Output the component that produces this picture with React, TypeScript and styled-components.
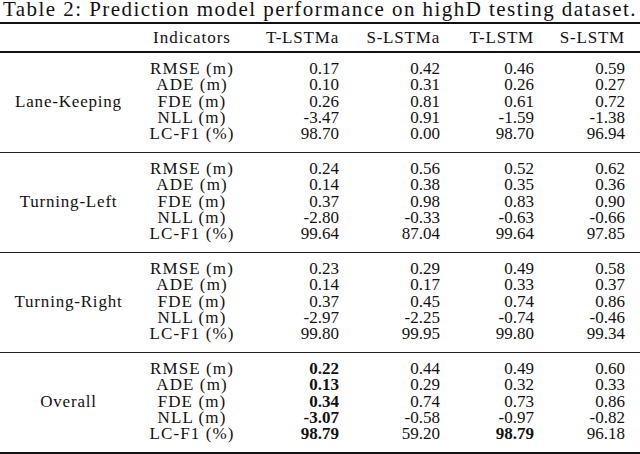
import styled, { createGlobalStyle } from "styled-components";

const GlobalStyle = createGlobalStyle`
  html, body {
    margin: 0;
    padding: 0;
    background: #fff;
  }
  body {
    font-family: "Liberation Serif", "Times New Roman", serif;
    color: #111;
  }
`;

type Cell = { v: string; bold?: boolean };

interface Group {
  name: string;
  rows: Cell[][];
}

const INDICATORS = ["RMSE (m)", "ADE (m)", "FDE (m)", "NLL (m)", "LC-F1 (%)"];
const MODELS = ["T-LSTMa", "S-LSTMa", "T-LSTM", "S-LSTM"];

const c = (v: string, bold = false): Cell => ({ v, bold });

const groups: Group[] = [
  {
    name: "Lane-Keeping",
    rows: [
      [c("0.17"), c("0.42"), c("0.46"), c("0.59")],
      [c("0.10"), c("0.31"), c("0.26"), c("0.27")],
      [c("0.26"), c("0.81"), c("0.61"), c("0.72")],
      [c("-3.47"), c("0.91"), c("-1.59"), c("-1.38")],
      [c("98.70"), c("0.00"), c("98.70"), c("96.94")],
    ],
  },
  {
    name: "Turning-Left",
    rows: [
      [c("0.24"), c("0.56"), c("0.52"), c("0.62")],
      [c("0.14"), c("0.38"), c("0.35"), c("0.36")],
      [c("0.37"), c("0.98"), c("0.83"), c("0.90")],
      [c("-2.80"), c("-0.33"), c("-0.63"), c("-0.66")],
      [c("99.64"), c("87.04"), c("99.64"), c("97.85")],
    ],
  },
  {
    name: "Turning-Right",
    rows: [
      [c("0.23"), c("0.29"), c("0.49"), c("0.58")],
      [c("0.14"), c("0.17"), c("0.33"), c("0.37")],
      [c("0.37"), c("0.45"), c("0.74"), c("0.86")],
      [c("-2.97"), c("-2.25"), c("-0.74"), c("-0.46")],
      [c("99.80"), c("99.95"), c("99.80"), c("99.34")],
    ],
  },
  {
    name: "Overall",
    rows: [
      [c("0.22", true), c("0.44"), c("0.49"), c("0.60")],
      [c("0.13", true), c("0.29"), c("0.32"), c("0.33")],
      [c("0.34", true), c("0.74"), c("0.73"), c("0.86")],
      [c("-3.07", true), c("-0.58"), c("-0.97"), c("-0.82")],
      [c("98.79", true), c("59.20"), c("98.79", true), c("96.18")],
    ],
  },
];

const COLUMNS = "137px 110px 92px 101px 94px 91px 15px";

const Page = styled.div`
  width: 640px;
  height: 454px;
  overflow: hidden;
`;

const Caption = styled.div`
  height: 22px;
  font-size: 21px;
  line-height: 19px;
  letter-spacing: 1.45px;
  text-align: center;
  white-space: nowrap;
`;

const Table = styled.div`
  border-top: 2px solid #111;
  border-bottom: 2px solid #111;
`;

const Row = styled.div`
  display: grid;
  grid-template-columns: ${COLUMNS};
  grid-auto-rows: 16.25px;
  font-size: 17px;
  line-height: 16.25px;
`;

const HeaderRow = styled(Row)`
  padding: 6px 0 4.75px;
  border-bottom: 2px solid #111;
`;

const GroupBlock = styled(Row)<{ $last?: boolean }>`
  padding: 8px 0 9.75px;
  border-bottom: ${(p) => (p.$last ? "none" : "1px solid #222")};
`;

const GroupName = styled.div`
  grid-column: 1;
  grid-row: 1 / span 5;
  align-self: center;
  text-align: center;
  letter-spacing: 0.8px;
`;

const Indicator = styled.div`
  grid-column: 2;
  text-align: center;
  white-space: nowrap;
  letter-spacing: 1.1px;
`;

const Num = styled.div<{ $bold?: boolean }>`
  text-align: right;
  white-space: nowrap;
  font-weight: ${(p) => (p.$bold ? 700 : 400)};
`;

const HeadCell = styled.div<{ $center?: boolean }>`
  text-align: ${(p) => (p.$center ? "center" : "right")};
  white-space: nowrap;
  letter-spacing: ${(p) => (p.$center ? "1px" : "0.8px")};
`;

export default function App() {
  return (
    <Page>
      <GlobalStyle />
      <Caption>Table 2: Prediction model performance on highD testing dataset.</Caption>
      <Table>
        <HeaderRow>
          <div />
          <HeadCell $center>Indicators</HeadCell>
          {MODELS.map((m) => (
            <HeadCell key={m}>{m}</HeadCell>
          ))}
          <div />
        </HeaderRow>
        {groups.map((g, gi) => (
          <GroupBlock key={g.name} $last={gi === groups.length - 1}>
            <GroupName>{g.name}</GroupName>
            {g.rows.flatMap((r, ri) => [
              <Indicator key={`i${ri}`} style={{ gridRow: ri + 1 }}>
                {INDICATORS[ri]}
              </Indicator>,
              ...r.map((cell, ci) => (
                <Num
                  key={`${ri}-${ci}`}
                  $bold={cell.bold}
                  style={{ gridRow: ri + 1, gridColumn: ci + 3 }}
                >
                  {cell.v}
                </Num>
              )),
            ])}
          </GroupBlock>
        ))}
      </Table>
    </Page>
  );
}
